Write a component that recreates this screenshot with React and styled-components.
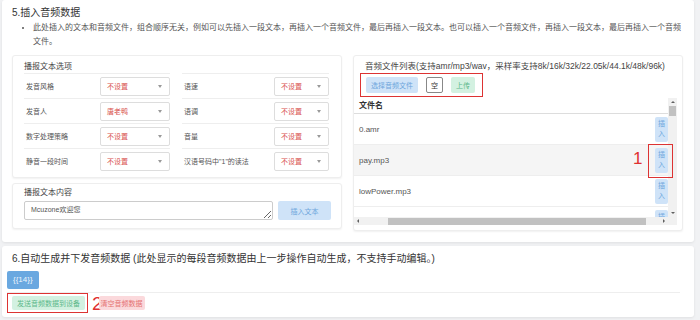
import React from 'react'
import styled, { createGlobalStyle } from 'styled-components'

const GlobalStyle = createGlobalStyle`
  body {
    margin: 0;
    background: #f1f2f4;
    font-family: "Liberation Sans", "Noto Sans CJK SC", sans-serif;
    color: #333;
  }
`

const Page = styled.div`
  width: 700px;
  height: 320px;
  box-sizing: border-box;
  padding: 0 6px 0 2px;
  overflow: hidden;
`

const Card = styled.section`
  background: #fff;
  border-radius: 3px;
  box-shadow: 0 1px 3px rgba(0, 0, 0, 0.08);
  padding: ${({ $pad }) => $pad};
  margin-bottom: ${({ $gap }) => $gap || 0}px;
`

const Title = styled.h2`
  margin: 0;
  padding-left: ${({ $indent }) => $indent || 0}px;
  font-size: 10px;
  line-height: 14px;
  font-weight: normal;
  color: #333;
`

const Notes = styled.ul`
  margin: 1px 0 0;
  padding-left: 21px;
  li {
    font-size: 8px;
    line-height: 14px;
    color: #555;
  }
`

const Columns = styled.div`
  display: grid;
  grid-template-columns: 330px 330px;
  column-gap: 11px;
  align-items: start;
  margin-top: 6px;
`

const Stack = styled.div`
  display: flex;
  flex-direction: column;
  gap: 5px;
`

const SubCard = styled.div`
  background: #fff;
  border: 1px solid #eee;
  border-radius: 3px;
  box-shadow: 0 1px 2px rgba(0, 0, 0, 0.06);
  padding: ${({ $pad }) => $pad};
`

const SubTitle = styled.div`
  font-size: ${({ $size }) => $size || 8}px;
  line-height: 12px;
  color: #444;
  white-space: nowrap;
  padding-left: ${({ $indent }) => $indent || 0}px;
`

const OptionGrid = styled.div`
  display: grid;
  grid-template-columns: 146px 147px;
  column-gap: 12px;
`

const OptionRow = styled.div`
  display: flex;
  align-items: center;
  height: 25px;
  box-sizing: border-box;
  border-top: 1px solid #eee;
`

const OptionLabel = styled.span`
  flex: 1;
  padding-left: 2px;
  font-size: 7px;
  color: #555;
  white-space: nowrap;
`

const Select = styled.div`
  width: ${({ $w }) => $w}px;
  height: 19px;
  box-sizing: border-box;
  border: 1px solid #ddd;
  border-radius: 2px;
  display: flex;
  align-items: center;
  justify-content: space-between;
  padding: 0 7px 0 6px;
  font-size: 7px;
  color: #d9534f;
  &::after {
    content: '';
    border-left: 2.5px solid transparent;
    border-right: 2.5px solid transparent;
    border-top: 3px solid #999;
  }
`

const InputRow = styled.div`
  display: flex;
  gap: 5px;
  margin-top: 2px;
`

const TextArea = styled.textarea`
  width: 249px;
  height: 19px;
  box-sizing: border-box;
  border: 1px solid #ccc;
  border-radius: 2px;
  padding: 3px 6px;
  font-family: inherit;
  font-size: 7px;
  line-height: 10px;
  color: #555;
  overflow: hidden;
`

const Btn = styled.button`
  width: ${({ $w }) => ($w ? `${$w}px` : 'auto')};
  height: ${({ $h }) => $h || 16}px;
  box-sizing: border-box;
  padding: 0 2px;
  border: ${({ $tone }) => ($tone === 'plain' ? '1px solid #888' : 'none')};
  border-radius: 2px;
  font-family: inherit;
  font-size: 7px;
  white-space: nowrap;
  background: ${({ $tone }) =>
    ({ blue: '#cfe3f8', green: '#d3f1e1', red: '#fbd9dc', plain: '#fff' })[$tone]};
  color: ${({ $tone }) =>
    ({ blue: '#6ea6dc', green: '#5cb88a', red: '#e57373', plain: '#333' })[$tone]};
`

const Toolbar = styled.div`
  display: inline-flex;
  align-items: center;
  gap: 8px;
  margin: 1px 0 0 6px;
  padding: 3px 7px 3px 5px;
  border: 1px solid #d33;
`

const TableRegion = styled.div`
  position: relative;
  display: grid;
  grid-template-columns: 314px 9px;
  grid-template-rows: 119px 8px;
  margin-top: 1px;
`

const TableBody = styled.div`
  overflow: hidden;
`

const HeadCell = styled.div`
  height: 16px;
  box-sizing: border-box;
  border-bottom: 1px solid #ddd;
  padding-left: 5px;
  font-size: 8px;
  line-height: 15px;
  font-weight: bold;
  color: #333;
`

const FileRow = styled.div`
  height: 31px;
  box-sizing: border-box;
  border-bottom: 1px solid #eee;
  display: flex;
  align-items: center;
  justify-content: space-between;
  padding-left: 5px;
  background: ${({ $hover }) => ($hover ? '#f5f5f5' : '#fff')};
  font-size: 8px;
  color: #555;
`

const InsertBtn = styled.button`
  width: 13px;
  height: 25px;
  box-sizing: border-box;
  padding: 0 3px;
  border: none;
  border-radius: 2px;
  background: #cfe3f8;
  color: #6ea6dc;
  font-family: inherit;
  font-size: 7px;
  line-height: 10px;
`

const ScrollTrack = styled.div`
  background: #f1f1f1;
  display: flex;
  flex-direction: ${({ $vertical }) => ($vertical ? 'column' : 'row')};
  align-items: center;
  justify-content: space-between;
`

const Thumb = styled.div`
  background: #c1c1c1;
  ${({ $vertical }) =>
    $vertical
      ? 'width: 7px; height: 10px; margin-bottom: auto;'
      : 'height: 7px; width: 258px; margin-left: 26px; margin-right: auto;'}
`

const Arrow = styled.span`
  width: 0;
  height: 0;
  margin: 3px;
  ${({ $dir }) =>
    ({
      up: 'border-left: 2px solid transparent; border-right: 2px solid transparent; border-bottom: 2px solid #606060;',
      down: 'border-left: 2px solid transparent; border-right: 2px solid transparent; border-top: 2px solid #606060;',
      left: 'border-top: 2px solid transparent; border-bottom: 2px solid transparent; border-right: 2px solid #606060;',
      right: 'border-top: 2px solid transparent; border-bottom: 2px solid transparent; border-left: 2px solid #606060;',
    })[$dir]}
`

const Corner = styled.div`
  background: #f1f1f1;
`

const MarkBox = styled.div`
  position: absolute;
  left: 294px;
  top: 46px;
  width: 25px;
  height: 34px;
  box-sizing: border-box;
  border: 1px solid #d33;
`

const MarkNum = styled.span`
  position: ${({ $float }) => ($float ? 'absolute' : 'static')};
  left: 279px;
  top: 52px;
  font-size: ${({ $size }) => $size}px;
  line-height: 1;
  color: #e03030;
  margin-right: ${({ $pull }) => $pull || 0}px;
  margin-left: ${({ $push }) => $push || 0}px;
`

const Badge = styled.div`
  width: fit-content;
  margin-top: 5px;
  height: 18px;
  line-height: 18px;
  padding: 0 6px;
  border-radius: 2px;
  background: #6aa8e0;
  color: #eef5fd;
  font-size: 8px;
`

const SendRow = styled.div`
  display: flex;
  align-items: center;
  margin-top: 3px;
  border-top: 1px solid #eee;
`

const AnnotBox = styled.div`
  display: inline-flex;
  padding: 2px 2px 2px 4px;
  border: 1px solid #d33;
`

const options = [
  ['发音风格', '不设置', '语速', '不设置'],
  ['发音人', '唐老鸭', '语调', '不设置'],
  ['数字处理策略', '不设置', '音量', '不设置'],
  ['静音一段时间', '不设置', '汉语号码中"1"的读法', '不设置'],
]

const files = ['0.amr', 'pay.mp3', 'lowPower.mp3', 'welcome.mp3']

export default function App() {
  return (
    <Page>
      <GlobalStyle />
      <Card $pad="6px 11px 11px 10px" $gap={4}>
        <Title>5.插入音频数据</Title>
        <Notes>
          <li>
            此处插入的文本和音频文件，组合顺序无关，例如可以先插入一段文本，再插入一个音频文件，最后再插入一段文本。也可以插入一个音频文件，再插入一段文本，最后再插入一个音频文件。
          </li>
        </Notes>
        <Columns>
          <Stack>
            <SubCard $pad="5px 12px 4px 11px">
              <SubTitle>播报文本选项</SubTitle>
              <OptionGrid>
                {options.map(([l1, v1, l2, v2]) => (
                  <React.Fragment key={l1}>
                    <OptionRow>
                      <OptionLabel>{l1}</OptionLabel>
                      <Select $w={70}>{v1}</Select>
                    </OptionRow>
                    <OptionRow>
                      <OptionLabel>{l2}</OptionLabel>
                      <Select $w={55}>{v2}</Select>
                    </OptionRow>
                  </React.Fragment>
                ))}
              </OptionGrid>
            </SubCard>
            <SubCard $pad="3px 10px 8px 11px">
              <SubTitle>播报文本内容</SubTitle>
              <InputRow>
                <TextArea defaultValue="Mcuzone欢迎您" />
                <Btn $tone="blue" $w={53} $h={19}>插入文本</Btn>
              </InputRow>
            </SubCard>
          </Stack>
          <SubCard $pad="4px 5px 5px 0">
            <SubTitle $indent={11} $size={8.5}>
              音频文件列表(支持amr/mp3/wav，采样率支持8k/16k/32k/22.05k/44.1k/48k/96k)
            </SubTitle>
            <Toolbar>
              <Btn $tone="blue" $w={52}>选择音频文件</Btn>
              <Btn $tone="plain" $w={17}>空</Btn>
              <Btn $tone="green" $w={24}>上传</Btn>
            </Toolbar>
            <TableRegion>
              <TableBody>
                <HeadCell>文件名</HeadCell>
                {files.map((f, i) => (
                  <FileRow key={f} $hover={i === 1}>
                    <span>{f}</span>
                    <InsertBtn>插入</InsertBtn>
                  </FileRow>
                ))}
              </TableBody>
              <ScrollTrack $vertical>
                <Arrow $dir="up" />
                <Thumb $vertical />
                <Arrow $dir="down" />
              </ScrollTrack>
              <ScrollTrack>
                <Arrow $dir="left" />
                <Thumb />
                <Arrow $dir="right" />
              </ScrollTrack>
              <Corner />
              <MarkNum $float $size={17}>1</MarkNum>
              <MarkBox />
            </TableRegion>
          </SubCard>
        </Columns>
      </Card>
      <Card $pad="6px 14px 4px 5px">
        <Title $indent={5}>
          6.自动生成并下发音频数据 (此处显示的每段音频数据由上一步操作自动生成，不支持手动编辑。)
        </Title>
        <Badge>{'{{14}}'}</Badge>
        <SendRow>
          <AnnotBox>
            <Btn $tone="green" $w={73} $h={14}>发送音频数据到设备</Btn>
          </AnnotBox>
          <MarkNum $size={19} $push={4} $pull={-4}>2</MarkNum>
          <Btn $tone="red" $w={46} $h={14}>清空音频数据</Btn>
        </SendRow>
      </Card>
    </Page>
  )
}
